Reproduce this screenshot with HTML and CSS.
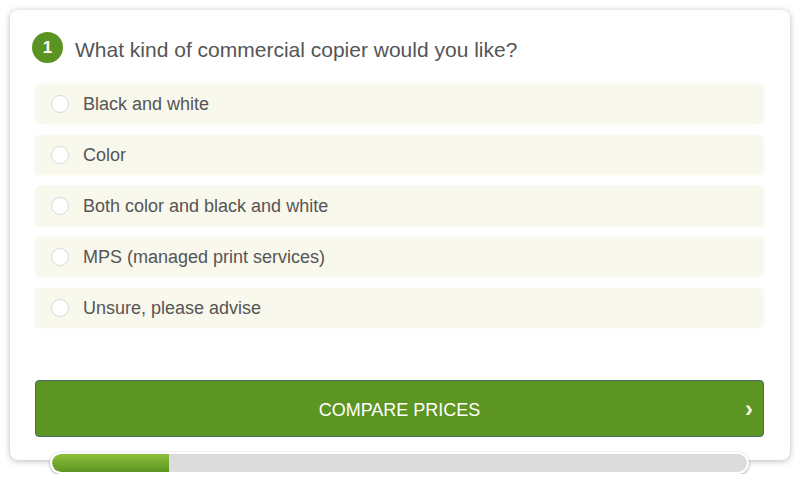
FILE: index.html
```html
<!DOCTYPE html>
<html>
<head>
<meta charset="utf-8">
<link rel="stylesheet" href="styles.css">
</head>
<body>
<div class="page">
  <div class="card">
    <div class="question">
      <span class="badge">1</span>
      <span class="qtext">What kind of commercial copier would you like?</span>
    </div>
    <div class="options">
      <label class="option"><span class="radio"></span><span>Black and white</span></label>
      <label class="option"><span class="radio"></span><span>Color</span></label>
      <label class="option"><span class="radio"></span><span>Both color and black and white</span></label>
      <label class="option"><span class="radio"></span><span>MPS (managed print services)</span></label>
      <label class="option"><span class="radio"></span><span>Unsure, please advise</span></label>
    </div>
    <button class="cta"><span class="cta-label">COMPARE PRICES</span><span class="chev">›</span></button>
  </div>
  <div class="progress"><div class="fill" style="width:117px"></div></div>
</div>
</body>
</html>
```
FILE: styles.css
```css
html, body {
  margin: 0;
  padding: 0;
  background: #ffffff;
}
body {
  font-family: "Liberation Sans", Arial, sans-serif;
}
.page {
  padding: 10px 10px 0 10px;
}
.card {
  width: 780px;
  height: 450px;
  box-sizing: border-box;
  background: #fff;
  border-radius: 8px;
  box-shadow: 0 1px 6px rgba(0,0,0,0.28);
  padding: 22px 26px 0 25px;
  display: flex;
  flex-direction: column;
}
.question {
  display: flex;
  align-items: center;
  gap: 12px;
  height: 31px;
  margin-left: -3px;
}
.badge {
  width: 31px;
  height: 31px;
  border-radius: 50%;
  background: #5b9322;
  color: #fff;
  font-size: 17px;
  font-weight: bold;
  display: flex;
  align-items: center;
  justify-content: center;
  flex: none;
}
.qtext {
  font-size: 21px;
  color: #555;
  position: relative;
  top: 2px;
}
.options {
  margin-top: 21px;
  display: flex;
  flex-direction: column;
  gap: 11px;
}
.option {
  height: 40px;
  background: #f9f8ed;
  border-radius: 5px;
  display: flex;
  align-items: center;
  padding-left: 16px;
  font-size: 18px;
  color: #555;
  box-shadow: 0 0 2px rgba(240,238,220,0.6);
}
.radio {
  width: 16px;
  height: 16px;
  border-radius: 50%;
  background: #fff;
  border: 1px solid #d9d9d9;
  margin-right: 14px;
  flex: none;
}
.cta {
  margin-top: 52px;
  height: 57px;
  width: 729px;
  border: 1px solid #4a6b68;
  border-radius: 4px;
  background: #5c9522;
  color: #fff;
  font-family: "Liberation Sans", Arial, sans-serif;
  font-size: 18px;
  display: flex;
  align-items: center;
  justify-content: center;
  position: relative;
  padding: 3px 0 0 0;
  cursor: pointer;
}
.chev {
  position: absolute;
  right: 10px;
  top: 50%;
  transform: translateY(-50%);
  font-size: 24px;
  font-weight: bold;
  color: #f4f7e0;
}
.progress {
  position: relative;
  z-index: 2;
  margin-top: -8px;
  margin-left: 40px;
  width: 699px;
  height: 22px;
  box-sizing: border-box;
  border: 2px solid #fff;
  border-radius: 11px;
  background: #dcdcdc;
  box-shadow: 0 1px 3px rgba(0,0,0,0.35);
  overflow: hidden;
}
.fill {
  height: 100%;
  background: linear-gradient(#8cc03b, #5c9522);
  border-radius: 9px 0 0 9px;
}
```
